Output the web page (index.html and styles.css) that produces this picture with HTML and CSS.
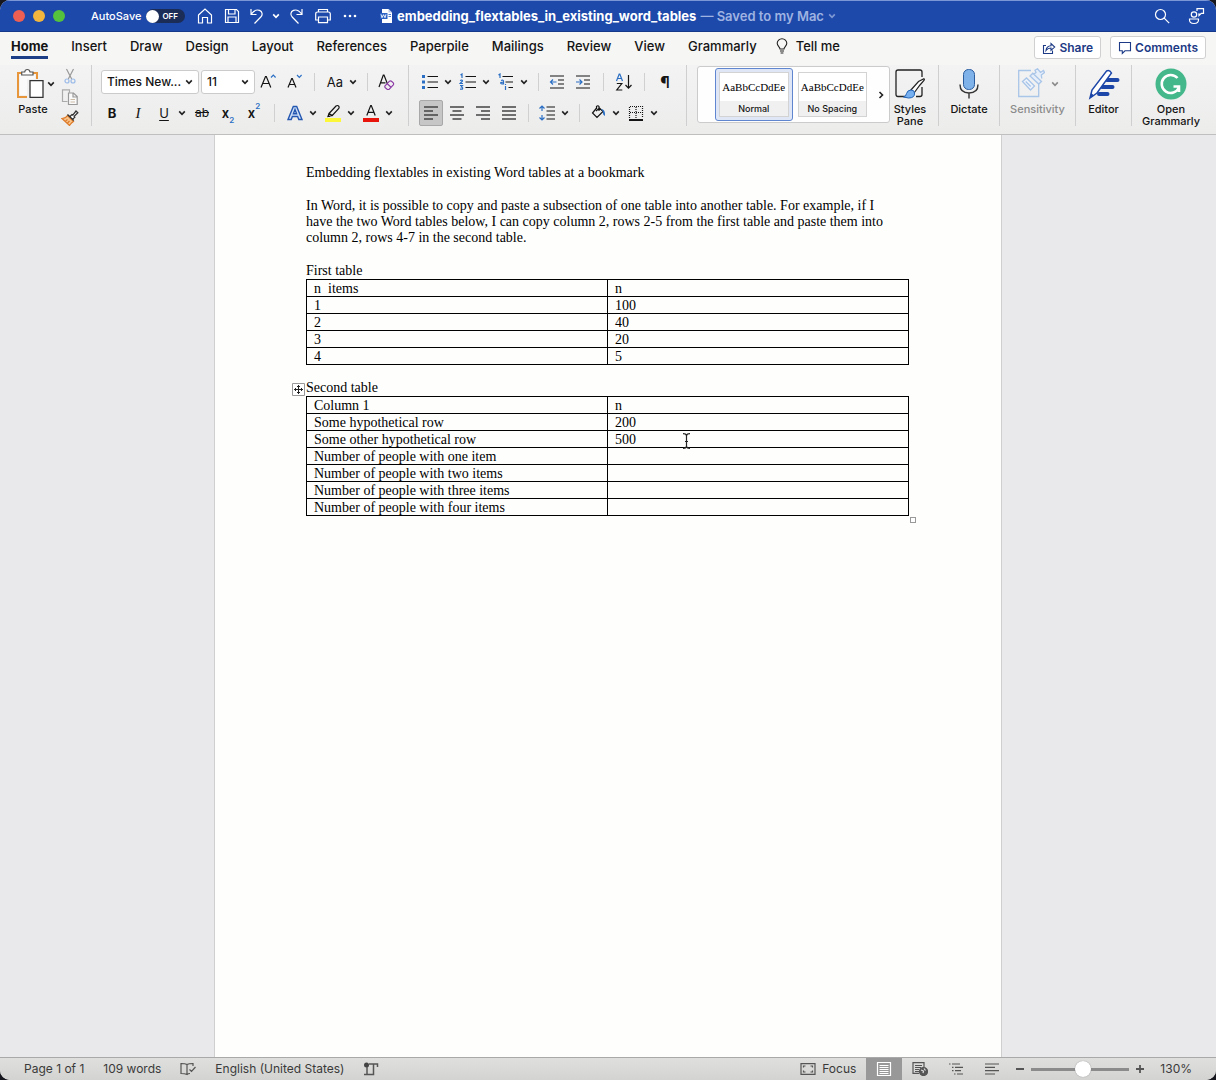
FILE: index.html
```html
<!DOCTYPE html>
<html lang="en">
<head>
<meta charset="utf-8">
<title>embedding_flextables_in_existing_word_tables</title>
<link rel="stylesheet" href="styles.css">
</head>
<body>
<svg class="defs" aria-hidden="true">
  <symbol id="caret" viewBox="0 0 8 8"><path d="M1.2 2.4 4 5.4 6.8 2.4" fill="none" stroke="currentColor" stroke-width="1.6"/></symbol>
</svg>
<div class="window">
  <header class="titlebar">
    <div class="title-left">
      <div class="lights">
        <button class="light red" aria-label="Close"></button>
        <button class="light yellow" aria-label="Minimize"></button>
        <button class="light green" aria-label="Zoom"></button>
      </div>
      <label class="autosave"><span>AutoSave</span><span class="toggle"><input type="checkbox"><span class="toggle-text">OFF</span></span></label>
      <div class="quick">
        <button class="tool" aria-label="Home"><svg width="18" height="18" viewBox="0 0 18 18"><path d="M2.5 8 9 2l6.500 6v8h-4v-5.500h-5V16h-4Z"/></svg></button>
        <button class="tool" aria-label="Save"><svg width="18" height="18" viewBox="0 0 18 18"><path d="M2.500 2.500h11l2 2v11h-13ZM5.500 2.500V7h6.500V2.500M5 15.500V10h8v5.500"/></svg></button>
        <button class="tool undo" aria-label="Undo"><svg width="18" height="18" viewBox="0 0 18 18"><path d="M3 2v5.500h5.500M3.200 7.200C6 3.500 9 2.400 11.500 3.400c3 1.200 3.400 4.600 1.300 6.600L6.500 16.500"/></svg><svg class="caret"><use href="#caret"/></svg></button>
        <button class="tool" aria-label="Redo"><svg width="18" height="18" viewBox="0 0 18 18"><path d="M15 2v5.500H9.500M14.800 7.200C12 3.500 9 2.400 6.500 3.400c-3 1.200-3.400 4.600-1.300 6.600l6.300 6.500"/></svg></button>
        <button class="tool" aria-label="Print"><svg width="18" height="18" viewBox="0 0 18 18"><path d="M4.500 5V2.500h9V5M4.500 13H1.700V7q0-2 2-2h10.600q2 0 2 2v6H13.500M4.500 10h9v5.700h-9Z"/></svg></button>
        <button class="tool" aria-label="More"><svg width="18" height="18" viewBox="0 0 18 18"><g fill="currentColor" stroke="none"><circle cx="4" cy="9" r="1.300"/><circle cx="9" cy="9" r="1.300"/><circle cx="14" cy="9" r="1.300"/></g></svg></button>
      </div>
    </div>
    <div class="doc-title">
      <svg width="13" height="16" viewBox="0 0 13 16"><path d="M2 1h6.500L12 4.500V15H2Z" fill="#fff"/><path d="M8.500 1v3.500H12" fill="#b9c8ea"/><path d="M0 5h7.500v6H0Z" fill="#2b62c4"/><path d="m1 6.300 1 3.400 1.500-3 1.500 3 1-3.400" fill="none" stroke="#fff" stroke-width=".9"/><path d="M8.500 6.500H11M8.500 8.500H11" stroke="#4a7bd0"/></svg>
      <strong>embedding_flextables_in_existing_word_tables</strong>
      <span class="saved">— Saved to my Mac</span>
      <svg class="caret dim"><use href="#caret"/></svg>
    </div>
    <div class="title-right">
      <button class="tool" aria-label="Search"><svg width="18" height="18" viewBox="0 0 18 18"><circle cx="7.500" cy="7.500" r="5"/><path d="m11.200 11.200 5 5"/></svg></button>
      <button class="tool" aria-label="Presence"><svg width="18" height="18" viewBox="0 0 18 18"><circle cx="7" cy="7.500" r="2.700"/><path d="M2.500 12h9q.5 4.500-4.500 4.500T2.500 12ZM10 4V1.700h6.500v4.600h-2.200L12 8.500V6.300"/></svg></button>
    </div>
  </header>

  <nav class="tabs">
    <div class="tablist">
      <a href="#home" class="tab active">Home</a>
      <a href="#insert" class="tab">Insert</a>
      <a href="#draw" class="tab">Draw</a>
      <a href="#design" class="tab">Design</a>
      <a href="#layout" class="tab">Layout</a>
      <a href="#references" class="tab">References</a>
      <a href="#paperpile" class="tab">Paperpile</a>
      <a href="#mailings" class="tab">Mailings</a>
      <a href="#review" class="tab">Review</a>
      <a href="#view" class="tab">View</a>
      <a href="#grammarly" class="tab">Grammarly</a>
      <a href="#tell" class="tab tell"><svg width="12" height="16" viewBox="0 0 12 16"><path d="M4 11C4 9 1.200 8 1.200 5.300a4.800 4.600 0 0 1 9.600 0C10.800 8 8 9 8 11ZM4 13h4M4.600 15h2.800" fill="none" stroke="#222" stroke-width="1.100"/></svg>Tell me</a>
    </div>
    <div class="actions">
      <button class="action"><svg width="14" height="14" viewBox="0 0 14 14"><path d="M4 4.500H1.500v8h9V9.500M4 9.500c.3-3 2-4.500 5-4.700V2.500L12.700 6 9 9.300V7C6.800 7 5.300 7.700 4 9.500Z"/></svg>Share</button>
      <button class="action"><svg width="14" height="14" viewBox="0 0 14 14"><path d="M1.500 1.500h11v8.300H7L4.300 12.500V9.800H1.500Z"/></svg>Comments</button>
    </div>
  </nav>

  <section class="ribbon" aria-label="Home tools">
    <div class="group paste-group">
      <button class="big">
        <span class="icon-row"><svg width="28" height="32" viewBox="0 0 28 32"><path d="M5.500 5H2v24h9M17 5h4v6" fill="none" stroke="#e8963c" stroke-width="2"/><path d="M4 7v20h7V11h8V7Z" fill="#fafafa"/><path d="M5.700 7V4h3q.3-2.500 2.600-2.500T14 4h3v3Z" fill="#fff" stroke="#555" stroke-width="1.200"/><path d="M14 12.600h13V29.400H14Z" fill="#fff" stroke="#333" stroke-width="1.300"/></svg><svg class="caret"><use href="#caret"/></svg></span>
        <span>Paste</span>
      </button>
      <div class="clip">
        <button class="tool" aria-label="Cut"><svg width="16" height="16" viewBox="0 0 16 16"><path d="m4.500 1 5.200 10M11.500 1 6.300 11" stroke="#999"/><circle cx="5" cy="13" r="2" stroke="#9bbbe8"/><circle cx="11" cy="13" r="2" stroke="#9bbbe8"/></svg></button>
        <button class="tool" aria-label="Copy"><svg width="18" height="16" viewBox="0 0 18 16"><path d="M6.500 12.500h-5V.8h7v3" stroke="#aaa"/><path d="M7.500 4h5l3.700 3.500v8H7.500ZM12 4v4h4" fill="#fafafa" stroke="#999"/><path d="M9.500 10.500h4.500M9.500 13h4.500" stroke="#cbbba4"/></svg></button>
        <button class="tool" aria-label="Format painter"><svg width="18" height="16" viewBox="0 0 18 16"><path d="M1 8.500q3.500 0 5.500-3l6 6q-2 1-4 4Z" fill="#f8c48c" stroke="#dd7a28"/><path d="m4.500 11 2-1.500M6.500 13l2-2" stroke="#dd7a28"/><path d="m6.500 4.500 6.300 6M9 6.500l2-2 .8.600L15 1l1.800 1.700-3.600 3.600.6.800-2 2" fill="#fff" stroke="#333" stroke-width="1.300"/></svg></button>
      </div>
    </div>

    <div class="group rows font-group">
      <div class="row">
        <span class="combo font-name"><select aria-label="Font"><option>Times New...</option></select><svg class="caret"><use href="#caret"/></svg></span>
        <span class="combo font-size"><select aria-label="Font size"><option>11</option></select><svg class="caret"><use href="#caret"/></svg></span>
        <div class="set">
          <button class="tool" aria-label="Grow font"><svg width="18" height="18" viewBox="0 0 18 18"><path d="M2 14.500 6.500 3.500h.8l4.500 11M3.800 10.500H10"/><path d="m12 4.500 2.300-2.300 2.300 2.300" class="b"/></svg></button>
          <button class="tool" aria-label="Shrink font"><svg width="18" height="18" viewBox="0 0 18 18"><path d="m3 14.500 3.700-9h.6l3.700 9M4.500 11.500h5"/><path d="m12 2 2.300 2.300L16.600 2" class="b"/></svg></button>
        </div>
        <span class="sep wide"></span>
        <button class="split" aria-label="Change case"><span class="glyph">Aa</span><svg class="caret"><use href="#caret"/></svg></button>
        <span class="sep"></span>
        <button class="tool" aria-label="Clear formatting"><svg width="18" height="18" viewBox="0 0 18 18"><path d="M2 14 6.300 2H7l3.500 9M3.600 9.800H8.500"/><path d="m7.800 13.200 4.700-5q1-.8 2 0l1.800 1.600q.8 1 0 2L12 16.500H10.300L8 14.500ZM10.300 10.800l3.700 3.400" stroke="#8b3aa5" fill="none"/></svg></button>
      </div>
      <div class="row">
        <div class="set">
          <button class="tool glyph bold" aria-label="Bold">B</button>
          <button class="tool glyph ital" aria-label="Italic">I</button>
          <button class="split" aria-label="Underline"><span class="glyph under">U</span><svg class="caret"><use href="#caret"/></svg></button>
        </div>
        <div class="set">
          <button class="tool glyph strike" aria-label="Strikethrough">ab</button>
          <button class="tool glyph semi" aria-label="Subscript">x<sub>2</sub></button>
          <button class="tool glyph semi" aria-label="Superscript">x<sup>2</sup></button>
        </div>
        <span class="sep wide"></span>
        <button class="split" aria-label="Text effects"><svg width="18" height="18" viewBox="0 0 18 18"><path d="M2 15.500 7.300 2.500h3.400L16 15.500h-3.200l-1.200-3H6.400l-1.200 3ZM7.400 9.800h3.200L9 5.500Z" fill="#cfe0f7" stroke="#2457b0" stroke-width="1.400"/></svg><svg class="caret"><use href="#caret"/></svg></button>
        <button class="split" aria-label="Highlight"><svg width="18" height="18" viewBox="0 0 18 18"><path d="M1 14h16v4H1Z" fill="#fdf73a" stroke="none"/><path d="m5 9.500 7-7.500q1.500-1 2.600 0t.2 2.500l-6.500 7ZM5 9.500 4 12.500l4.300-1M3.800 12.500H6"/></svg><svg class="caret"><use href="#caret"/></svg></button>
        <button class="split" aria-label="Font color"><svg width="18" height="18" viewBox="0 0 18 18"><path d="M1 14h16v4H1Z" fill="#e8150c" stroke="none"/><path d="m4.800 11.500 3.900-10h.6l3.900 10M6.200 8.300h5.600"/></svg><svg class="caret"><use href="#caret"/></svg></button>
      </div>
    </div>

    <div class="group rows para-group">
      <div class="row">
        <button class="split" aria-label="Bullets"><svg width="18" height="18" viewBox="0 0 18 18"><path d="M1 2h3v3H1ZM1 7.500h3v3H1ZM1 13h3v3H1Z" fill="#2b6fc4" stroke="none"/><path d="M6.500 3.500H17M6.500 9H17M6.500 14.500H17"/></svg><svg class="caret"><use href="#caret"/></svg></button>
        <button class="split" aria-label="Numbering"><svg width="18" height="18" viewBox="0 0 18 18"><path d="M1.500 2 3 1v4M1 7.500q2.500-1 2.500.5L1 10.500h3M1 12.500h2.500L2.300 14q2 .5 1 2.200H1" class="b"/><path d="M6.500 3.500H17M6.500 9H17M6.500 14.500H17"/></svg><svg class="caret"><use href="#caret"/></svg></button>
        <button class="split" aria-label="Multilevel list"><svg width="18" height="18" viewBox="0 0 18 18"><path d="M1.500 2 3 1v4M4 7.500q2.500-1 2.500.8v2.500H5q-1.500 0-1.200-1.200L6.500 9M8.500 13v4M8.500 11v1" class="b"/><path d="M5.500 3.500H16M8.500 9H16M11.500 14.500H16"/></svg><svg class="caret"><use href="#caret"/></svg></button>
        <span class="sep"></span>
        <div class="set">
          <button class="tool" aria-label="Decrease indent"><svg width="18" height="18" viewBox="0 0 18 18"><path d="M2 3h14M10 7h6M10 11h6M2 15h14"/><path d="M8.500 9h-6M5 6.500 2.500 9 5 11.500" class="b"/></svg></button>
          <button class="tool" aria-label="Increase indent"><svg width="18" height="18" viewBox="0 0 18 18"><path d="M2 3h14M10 7h6M10 11h6M2 15h14"/><path d="M2 9h6M5.500 6.500 8 9l-2.500 2.500" class="b"/></svg></button>
        </div>
        <span class="sep wide"></span>
        <button class="tool" aria-label="Sort"><svg width="18" height="18" viewBox="0 0 18 18"><path d="m1.500 8 2.700-7h.6l2.700 7M2.500 5.500h4" class="b"/><path d="M1.800 10.500h5l-5 6.500h5.500M13.500 2v13M10.500 12l3 3.200 3-3.200"/></svg></button>
        <span class="sep wide"></span>
        <button class="tool glyph pilcrow" aria-label="Show marks">¶</button>
      </div>
      <div class="row">
        <button class="tool align on" aria-label="Align left"><svg width="16" height="16" viewBox="0 0 16 16"><path d="M1 2h14M1 6h9M1 10h14M1 14h9"/></svg></button>
        <button class="tool align" aria-label="Center"><svg width="16" height="16" viewBox="0 0 16 16"><path d="M1 2h14M3.500 6h9M1 10h14M3.500 14h9"/></svg></button>
        <button class="tool align" aria-label="Align right"><svg width="16" height="16" viewBox="0 0 16 16"><path d="M1 2h14M6 6h9M1 10h14M6 14h9"/></svg></button>
        <button class="tool align" aria-label="Justify"><svg width="16" height="16" viewBox="0 0 16 16"><path d="M1 2h14M1 6h14M1 10h14M1 14h14"/></svg></button>
        <span class="sep"></span>
        <button class="split" aria-label="Line spacing"><svg width="18" height="18" viewBox="0 0 18 18"><path d="M4 2v5M4 11v5M1.500 4.500 4 2l2.500 2.500M1.500 13.500 4 16l2.500-2.500" class="b"/><path d="M8.500 3H17M8.500 7H17M8.500 11H17M8.500 15H17"/></svg><svg class="caret"><use href="#caret"/></svg></button>
        <span class="sep"></span>
        <button class="split" aria-label="Shading"><svg width="18" height="18" viewBox="0 0 18 18"><path d="M8 3.500 3.500 9l4.500 4.500 6-6-3.500-3.500L7 7M7.500 5V2.500q1.500-1.500 2.500 0V7"/><path d="M12 5q4.500 0 4 7-2.500-1-2-4.500Z" fill="#2b6fc4" stroke="none"/></svg><svg class="caret"><use href="#caret"/></svg></button>
        <button class="split" aria-label="Borders"><svg width="18" height="18" viewBox="0 0 18 18"><path d="M2.500 14V2.500h13V14M9 3v12M3 8.500h12" stroke-dasharray="1 1"/><path d="M2 16h14" stroke-width="2"/></svg><svg class="caret"><use href="#caret"/></svg></button>
      </div>
    </div>

    <div class="group styles-group">
      <div class="gallery">
        <button class="style on"><span class="card"><span class="sample">AaBbCcDdEe</span><span class="name">Normal</span></span></button>
        <button class="style"><span class="card"><span class="sample">AaBbCcDdEe</span><span class="name">No Spacing</span></span></button>
        <button class="next" aria-label="More styles"><svg width="8" height="8" viewBox="0 0 8 8"><path d="m2.500 1 3 3-3 3" fill="none" stroke="#222" stroke-width="1.600"/></svg></button>
      </div>
      <button class="big pane"><svg width="32" height="32" viewBox="0 0 32 32"><path d="M12 28.500H4q-2 0-2-2V4q0-2 2-2h22q2 0 2 2v5M28 19v7.500q0 2-2 2h-4" fill="none" stroke="#222" stroke-width="1.300"/><path d="m16.500 22.500 8-9 5.500-2.800q.8.500 0 1.800L26 17l-6 8Z" fill="#fff" stroke="#222" stroke-width="1.200"/><path d="M9.500 29q2.500-.5 3-3.500 1-3.500 4.500-3.500T20.500 25q.5 5-6 5Z" fill="#76b0f0" stroke="#2263b5"/></svg><span>Styles<br>Pane</span></button>
    </div>

    <div class="group dictate">
      <button class="big"><svg width="24" height="32" viewBox="0 0 24 32"><rect x="6.500" y="1.500" width="11" height="20" rx="5" fill="#7fb2e8" stroke="#2b5c9e"/><path d="M3 16.500q0 8.500 9 8.500t9-8.500M12 25v5.500" fill="none" stroke="#333" stroke-width="1.400"/></svg><span>Dictate</span></button>
    </div>
    <div class="group sensitivity">
      <button class="big faded"><span class="icon-row"><svg width="28" height="32" viewBox="0 0 28 32"><path d="M14 2.500H1.700v26h20V16" fill="none" stroke="#a9c5e8" stroke-width="1.300"/><path d="m5.500 13.500 4-3.500 8 8-4 4ZM8.700 13.500l5 5" fill="#eef3fb" stroke="#a9c5e8" stroke-width="1.300"/><path d="m13 8 2.800-2.800 8.700 8.300-2.800 2.500ZM17 6l2-1.500-1-2.200 2.500-1.500 3 3.700 3-2 1 2-3.200 2.500.5 3.500" fill="#e6eefa" stroke="#a9c5e8" stroke-width="1.300"/></svg><svg class="caret"><use href="#caret"/></svg></span><span>Sensitivity</span></button>
    </div>
    <div class="group editor">
      <button class="big"><svg width="32" height="32" viewBox="0 0 32 32"><path d="M19 12h10.500M14 19h10.500M11 26h8.500" stroke="#1c46a8" stroke-width="4" stroke-linecap="round"/><path d="M2 30 4 22 18.500 3q3-1.500 5 2L9 25Z" fill="#fff" stroke="#1c46a8" stroke-width="1.500"/><path d="m2 30 1.300-5 2.700 2.500Z" fill="#1c46a8"/></svg><span>Editor</span></button>
    </div>
    <div class="group grammarly">
      <button class="big"><svg width="32" height="32" viewBox="0 0 32 32"><circle cx="16" cy="16" r="15.500" fill="#44b78b"/><path d="M22.500 10A9 9 0 1 0 24 19.500M18.500 18.500H24V24" fill="none" stroke="#fff" stroke-width="2.600"/></svg><span>Open<br>Grammarly</span></button>
    </div>
  </section>

  <main class="workspace">
    <article class="page">
      <p>Embedding flextables in existing Word tables at a bookmark</p>
      <p>In Word, it is possible to copy and paste a subsection of one table into another table. For example, if I<br>have the two Word tables below, I can copy column 2, rows 2-5 from the first table and paste them into<br>column 2, rows 4-7 in the second table.</p>
      <table>
        <caption>First table</caption>
        <tr><td>n&nbsp; items</td><td>n</td></tr>
        <tr><td>1</td><td>100</td></tr>
        <tr><td>2</td><td>40</td></tr>
        <tr><td>3</td><td>20</td></tr>
        <tr><td>4</td><td>5</td></tr>
      </table>
      <div class="selected-table">
        <svg class="move" width="13" height="13" viewBox="0 0 13 13"><path d="M.5.5h12v12H.5Z" fill="#fff" stroke="#999"/><path d="M6.500 2v9M2 6.500h9M5 3.500h3M5 9.500h3M3.500 5v3M9.500 5v3" stroke="#222"/></svg>
        <table>
          <caption>Second table</caption>
          <tr><td>Column 1</td><td>n</td></tr>
          <tr><td>Some hypothetical row</td><td>200</td></tr>
          <tr><td>Some other hypothetical row</td><td>500</td></tr>
          <tr><td>Number of people with one item</td><td></td></tr>
          <tr><td>Number of people with two items</td><td></td></tr>
          <tr><td>Number of people with three items</td><td></td></tr>
          <tr><td>Number of people with four items</td><td></td></tr>
        </table>
        <svg class="cursor" width="9" height="16" viewBox="0 0 9 16"><path d="M1 .7q3 0 3.500 1.800Q5 .7 8 .7M1 15.300q3 0 3.500-1.800.5 1.800 3.500 1.800M4.500 2v12M3 8.500h3" fill="none" stroke="#222" stroke-width="1.200"/></svg>
        <span class="grip"></span>
      </div>
    </article>
  </main>

  <footer class="status">
    <div class="status-left">
      <button>Page 1 of 1</button>
      <button>109 words</button>
      <button aria-label="Proofing"><svg width="16" height="14" viewBox="0 0 16 14"><path d="M7 2.500Q5.500 1.500 1 1.500v10q4 0 6 1 1-1 3-1M7 2.500v10M7 2.500q1.500-1 6-1V4M9.500 7.500l2 2 4-4.500"/></svg></button>
      <button>English (United States)</button>
      <button aria-label="Macros"><svg width="16" height="14" viewBox="0 0 16 14"><circle cx="3.500" cy="3" r="2.500" fill="#444" stroke="none"/><path d="M4 5v7.500M1 12.500h9.500V2M6 2h8.500v3" stroke-width="1.500"/></svg></button>
    </div>
    <div class="status-right">
      <button class="focus"><svg width="16" height="12" viewBox="0 0 16 12"><path d="M1 .7h14v10.600H1ZM3.500 4.500v-1.500h2M10.500 3h2v1.500M3.500 7.500V9h2M10.500 9h2V7.500"/></svg>Focus</button>
      <button class="view on" aria-label="Print layout"><svg width="16" height="14" viewBox="0 0 16 14"><path d="M1.500.5h13v13h-13ZM3.500 3.500h9M3.500 5.500h9M3.500 7.500h9M3.500 9.500h9M3.500 11.500h9" stroke="#fff"/></svg></button>
      <button class="view" aria-label="Web layout"><svg width="16" height="14" viewBox="0 0 16 14"><path d="M12 5V.7H1v10.600h6M3 3.500h7M3 5.500h6M3 7.500h4M3 9.500h4"/><circle cx="11.500" cy="9.500" r="4" fill="#555"/><path d="m9 8 2.500 1-.5 2M12 6.500l1.500 2" stroke="#ddd"/></svg></button>
      <button class="view" aria-label="Outline"><svg width="16" height="14" viewBox="0 0 16 14"><path d="M1 2h1.500M4 2h8M4 5.300h1.500M7 5.300h8M4 8.700h1.500M7 8.700h6M6 12h1.500M9 12h6"/></svg></button>
      <button class="view" aria-label="Draft"><svg width="16" height="14" viewBox="0 0 16 14"><path d="M1 2h14M1 5.300h10M1 8.700h14M1 12h10"/></svg></button>
      <div class="zoom">
        <button aria-label="Zoom out"><svg width="10" height="10" viewBox="0 0 10 10"><path d="M1 5h8" stroke-width="1.800"/></svg></button>
        <input type="range" min="0" max="100" value="53" aria-label="Zoom">
        <button aria-label="Zoom in"><svg width="10" height="10" viewBox="0 0 10 10"><path d="M1 5h8M5 1v8" stroke-width="1.800"/></svg></button>
      </div>
      <button class="percent">130%</button>
    </div>
  </footer>
</div>
</body>
</html>
```
FILE: styles.css
```css
* { box-sizing: border-box; }
body {
  margin: 0;
  background: #17171f;
  color: #141414;
  font: 500 12px/16px Inter, "Liberation Sans", sans-serif;
}
button {
  margin: 0;
  padding: 0;
  border: 0;
  background: none;
  color: inherit;
  font: inherit;
}
a { color: inherit; text-decoration: none; }
svg { flex: none; display: block; }
.defs { position: absolute; width: 0; height: 0; }
.caret { width: 8px; height: 8px; color: #222; }
.window {
  display: flex;
  flex-direction: column;
  min-height: 100vh;
  border-radius: 10px;
  overflow: hidden;
  background: #e9e9eb;
}

/* Title bar */
.titlebar {
  display: grid;
  grid-template-columns: 1fr auto 1fr;
  align-items: center;
  height: 32px;
  border-top: 1px solid #7b97d6;
  border-bottom: 1px solid #16388a;
  background: #1d49aa;
  color: #fff;
}
.title-left { display: flex; align-items: center; padding-left: 13px; }
.lights { display: flex; gap: 8px; margin-right: 26px; }
.light { width: 12px; height: 12px; border-radius: 50%; }
.red { background: #ee5f53; }
.yellow { background: #f2b63f; }
.green { background: #55c23d; }
.autosave { display: flex; align-items: center; gap: 5px; font-size: 11px; }
.toggle {
  display: flex;
  align-items: center;
  gap: 3px;
  width: 39px;
  height: 14px;
  border-radius: 7px;
  background: #1b2c57;
}
.toggle input {
  appearance: none;
  width: 13px;
  height: 13px;
  margin: 0;
  border-radius: 50%;
  background: #fff;
}
.toggle-text { font-size: 8px; font-weight: 600; }
.quick { display: flex; gap: 5px; margin-left: 9px; }
.tool {
  display: flex;
  align-items: center;
  justify-content: center;
  width: 22px;
  height: 22px;
}
.undo { width: 32px; gap: 6px; }
.tool svg:not(.caret), .split svg:not(.caret) { fill: none; stroke: currentColor; stroke-width: 1.2; }
.titlebar .caret { color: #fff; }
.doc-title { display: flex; align-items: center; gap: 4px; font-size: 13px; }
.doc-title strong { font-weight: 700; }
.saved { color: #9fb3e2; font-weight: 600; }
.titlebar .dim { color: #7f98d4; }
.title-right { display: flex; justify-content: flex-end; gap: 12px; padding-right: 9px; }

/* Tabs */
.tabs {
  display: flex;
  justify-content: space-between;
  height: 33px;
  padding: 4px 10px 0 11px;
  background: #f6f6f5;
}
.tablist { display: flex; gap: 23px; font-size: 13px; }
.tab { height: 23px; padding-top: 2px; }
.active { border-bottom: 3px solid #1c3f87; font-weight: 700; }
.tell { display: flex; gap: 8px; margin-left: -4px; }
.actions { display: flex; gap: 9px; }
.action {
  display: flex;
  align-items: center;
  gap: 3px;
  height: 23px;
  padding: 0 7px;
  border: 1px solid #d0d0d0;
  border-radius: 3px;
  background: #fff;
  color: #1c3a85;
  font-weight: 600;
}
.action svg { fill: none; stroke: currentColor; stroke-width: 1.1; }

/* Ribbon */
.ribbon {
  display: flex;
  height: 70px;
  padding-bottom: 8px;
  border-bottom: 1px solid #bfbfbf;
  background: linear-gradient(#f3f3f4, #ececeb);
  font-size: 11px;
  line-height: 12px;
}
.group { display: flex; align-items: flex-start; border-right: 1px solid #cfcfcf; }
.rows { flex-direction: column; gap: 5px; padding: 4px 0 0 9px; }
.row { display: flex; align-items: center; gap: 2px; height: 26px; }
.set { display: flex; gap: 4px; }
.sep { width: 1px; height: 18px; margin: 0 5px; background: #d0d0d0; }
.wide { margin: 0 7px; }
.split { display: flex; align-items: center; width: 36px; height: 22px; gap: 5px; padding-left: 2px; }
.split .glyph { width: 18px; text-align: center; }
.b { stroke: #2b6fc4; }
.big {
  display: flex;
  flex-direction: column;
  align-items: center;
  gap: 3px;
  width: 100%;
  padding-top: 3px;
  font-weight: 500;
}
.icon-row { display: flex; align-items: center; gap: 6px; }
.paste-group { width: 92px; padding-left: 11px; gap: 4px; }
.paste-group .big { width: 44px; }
.paste-group .icon-row { gap: 3px; padding-left: 5px; }
.clip { display: flex; flex-direction: column; }
.clip .tool { height: 21px; }
.font-group { width: 317px; }
.para-group { width: 278px; padding-left: 10px; }
.combo { display: grid; grid-template-columns: 1fr 14px; align-items: center; height: 24px; }
.combo select {
  grid-area: 1 / 1 / 2 / 3;
  appearance: none;
  width: 100%;
  height: 24px;
  padding: 0 5px;
  border: 1px solid #cbcbcb;
  border-radius: 3px;
  background: #fff;
  color: #141414;
  font: 500 12px/16px Inter, "Liberation Sans", sans-serif;
}
.combo .caret { grid-area: 1 / 2 / 2 / 3; pointer-events: none; }
.font-name { width: 98px; }
.font-size { width: 54px; }
.glyph { font-size: 13px; line-height: 18px; font-weight: 400; }
.bold { font-weight: 700; }
.ital { font-family: "Liberation Serif", serif; font-style: italic; font-size: 15px; }
.under { text-decoration: underline; text-underline-offset: 2px; }
.strike { font-size: 12px; text-decoration: line-through; }
.semi { font-weight: 600; }
.glyph sub, .glyph sup { color: #2b6fc4; font-size: 8px; line-height: 8px; }
.glyph sub { align-self: flex-end; }
.glyph sup { align-self: flex-start; }
.pilcrow { font-size: 16px; font-weight: 600; }
.align { width: 24px; height: 26px; color: #444; }
.align svg:not(.caret) { stroke-width: 1.5; }
.ribbon .on.align { border: 1px solid #a8a8a8; border-radius: 2px; background: #c6c6c6; }
.styles-group { width: 252px; padding-left: 10px; }
.gallery {
  display: flex;
  align-items: center;
  gap: 1px;
  width: 193px;
  height: 57px;
  margin-top: 1px;
  padding-left: 17px;
  border: 1px solid #cbcbcb;
  border-radius: 3px;
  background: #fefefe;
}
.style { width: 78px; height: 53px; padding: 3px; border: 1px solid transparent; border-radius: 3px; }
.style.on { border-color: #5f86cf; background: #dfe7f7; }
.card { display: flex; flex-direction: column; height: 45px; border: 1px solid #d3d3d3; background: #fff; }
.sample { flex: 1; font: 11px/28px "Liberation Serif", serif; color: #000; text-align: center; }
.name { height: 15px; background: #f0f0f0; font-size: 9px; line-height: 15px; text-align: center; }
.next { display: flex; justify-content: center; width: 17px; }
.pane { width: 40px; }
.dictate { width: 61px; }
.sensitivity { width: 76px; }
.faded, .faded .caret { color: #8b8b8b; }
.editor { width: 56px; }
.grammarly { flex: 1; min-width: 80px; border-right: 0; padding-right: 6px; }

/* Document */
.workspace { flex: 1; display: flex; justify-content: center; background: #e9e9eb; }
.page {
  width: 788px;
  padding: 30px 91px;
  border: solid #cfcfd0;
  border-width: 0 1px;
  background: #fefefd;
  color: #000;
  font: 14px/16px "Liberation Serif", serif;
}
.page p { margin: 0 0 17px; }
.page table { width: 603px; border-collapse: collapse; table-layout: fixed; }
.page caption { height: 16px; text-align: left; }
.page td { height: 17px; padding: 1px 7px 0; border: 1px solid #000; line-height: 15px; }
.selected-table { position: relative; width: 603px; margin-top: 15px; }
.move { position: absolute; left: -14px; top: 3px; }
.cursor { position: absolute; left: 376px; top: 53px; }
.grip { position: absolute; right: -7px; bottom: -7px; width: 6px; height: 6px; border: 1px solid #999; background: #fff; }

/* Status bar */
.status {
  display: flex;
  justify-content: space-between;
  height: 23px;
  border-top: 1px solid #a9a9a9;
  background: linear-gradient(#dfdfdd, #d3d3d2);
  color: #3a3a3a;
  font-weight: 400;
}
.status svg { fill: none; stroke: #555; stroke-width: 1.2; }
.status-left { display: flex; gap: 19px; padding-left: 24px; }
.status-left button, .status-right button { display: flex; align-items: center; }
.status-right { display: flex; }
.focus { gap: 6px; margin-right: 10px; }
.view { justify-content: center; width: 36px; }
.view.on { background: #989898; }
.zoom { display: flex; align-items: center; gap: 6px; padding-left: 5px; }
.zoom input {
  appearance: none;
  width: 98px;
  height: 16px;
  margin: 0;
  background: linear-gradient(#8b8b8b, #8b8b8b) center / 100% 3px no-repeat;
}
.zoom input::-webkit-slider-thumb {
  appearance: none;
  width: 16px;
  height: 16px;
  border-radius: 50%;
  background: #fff;
  box-shadow: 0 0 1px #777;
}
.percent { margin: 0 24px 0 15px; }
```
